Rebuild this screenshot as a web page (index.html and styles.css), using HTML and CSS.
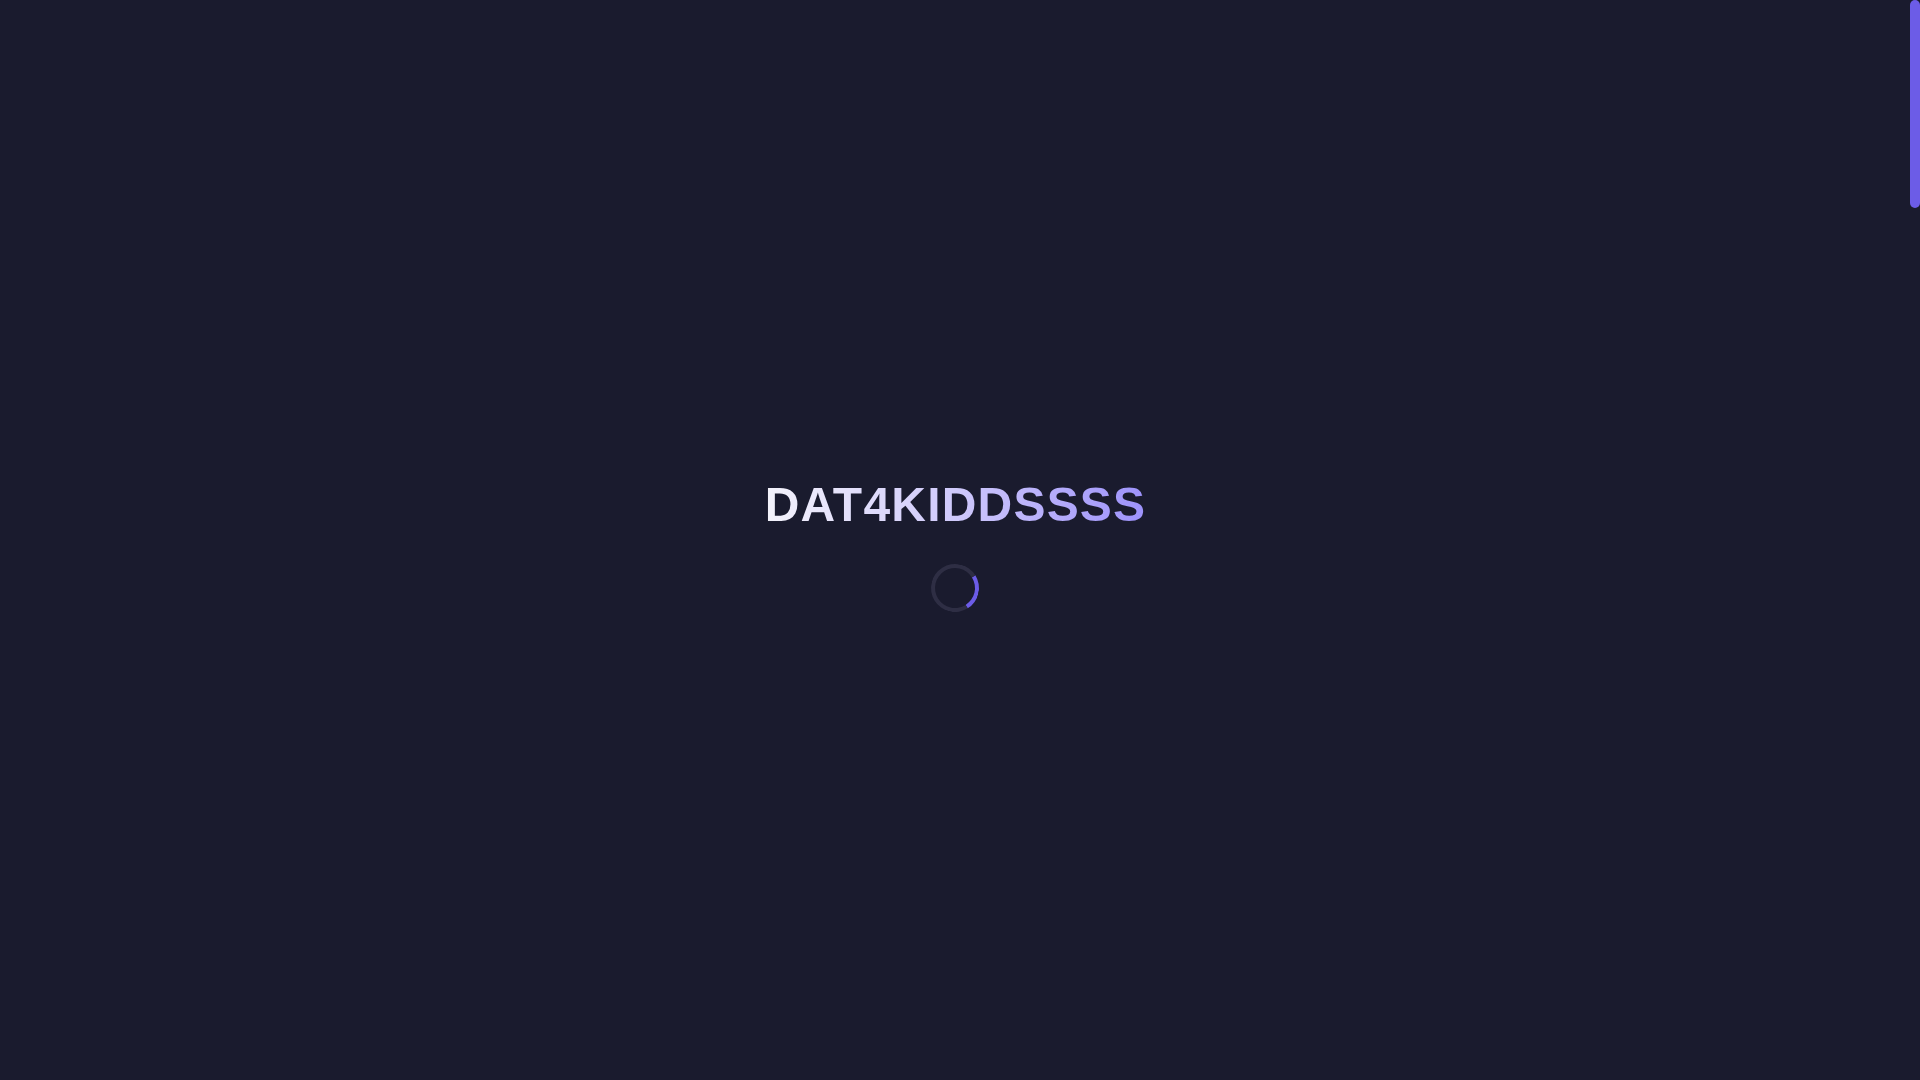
FILE: index.html
```html
<!DOCTYPE html>
<html lang="en">
<head>
<meta charset="utf-8">
<title>DAT4KIDDSSSS</title>
<link rel="stylesheet" href="styles.css">
</head>
<body>
<div class="layout">
  <div class="loader">
    <h1 class="loader-title">DAT4KIDDSSSS</h1>
    <div class="spinner"></div>
  </div>
  <div class="scrollbar">
    <div class="scrollbar-thumb"></div>
  </div>
</div>
</body>
</html>
```
FILE: styles.css
```css
html, body {
  margin: 0;
  padding: 0;
  height: 100%;
  overflow: hidden;
  background: #1a1b2e;
  font-family: "Liberation Sans", Arial, sans-serif;
}
.layout {
  display: flex;
  height: 100%;
}
.loader {
  flex: 1;
  display: flex;
  flex-direction: column;
  align-items: center;
  justify-content: center;
  padding-top: 9px;
  box-sizing: border-box;
}
.loader-title {
  margin: 0 0 31px;
  padding-left: 1px;
  font-size: 48px;
  font-weight: 700;
  line-height: 1.15;
  letter-spacing: 1.2px;
  background: linear-gradient(90deg, #f4f3fb 0%, #cfc9fb 50%, #9d92fb 100%);
  -webkit-background-clip: text;
  background-clip: text;
  color: transparent;
}
.spinner {
  width: 48px;
  height: 48px;
  box-sizing: border-box;
  border: 4px solid #2e2e44;
  border-top-color: #6c5ce7;
  border-radius: 50%;
  transform: rotate(103deg);
}
.scrollbar {
  width: 10px;
  flex: none;
  background: #1a1b2e;
}
.scrollbar-thumb {
  height: 208px;
  background: #6c5ce7;
  border-radius: 5px;
}
```
